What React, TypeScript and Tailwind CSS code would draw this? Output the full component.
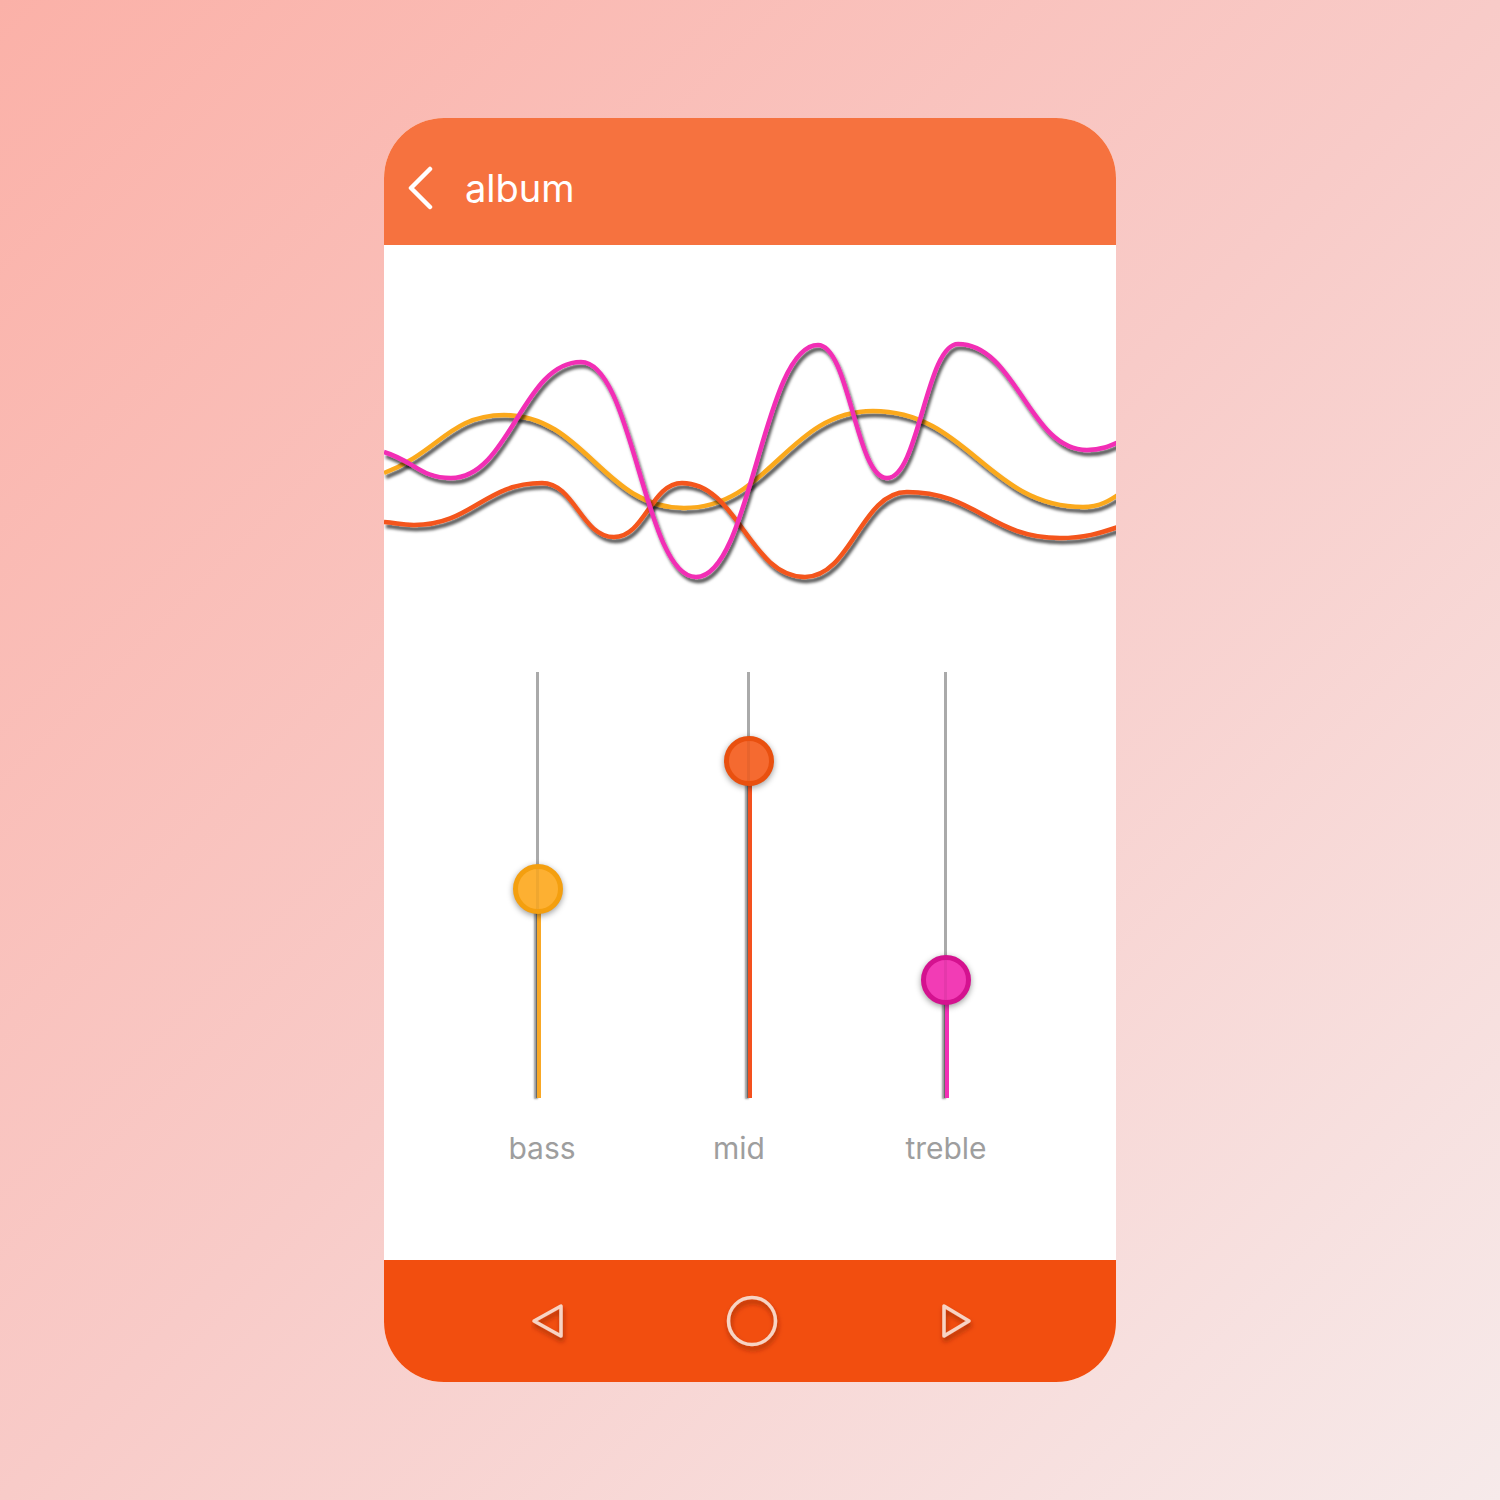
import React from "react"

type Pt = [number, number]

// smooth curve through extrema, control points kept horizontal
function wavePath(pts: Pt[], k = 0.45) {
  let d = `M${pts[0][0]},${pts[0][1]}`
  for (let i = 0; i < pts.length - 1; i++) {
    const [x1, y1] = pts[i]
    const [x2, y2] = pts[i + 1]
    const dx = (x2 - x1) * k
    const c1y = i === 0 ? y1 + (y2 - y1) * 0.35 : y1
    d += ` C${x1 + dx},${c1y} ${x2 - dx},${y2} ${x2},${y2}`
  }
  return d
}

const waves = [
  {
    color: "#fba91f",
    pts: [[384, 473], [504, 415], [684, 508], [873, 411], [1083, 507], [1160, 478]] as Pt[],
  },
  {
    color: "#f4541a",
    pts: [[384, 522], [414, 525], [542, 483], [614, 537], [682, 483], [805, 577], [907, 492], [1060, 538], [1170, 518]] as Pt[],
  },
  {
    color: "#f22fb5",
    pts: [[384, 452], [451, 478], [581, 362], [696, 577], [818, 345], [887, 478], [958, 344], [1087, 450], [1150, 434]] as Pt[],
  },
]

const sliders = [
  { label: "bass", knob: 217, ring: "#f49f0f", fill: "#fdb032", line: "#f9a825", ml: "ml-[94px]", shift: "translate-x-[4px]" },
  { label: "mid", knob: 89, ring: "#e9500f", fill: "#f56a30", line: "#f4511e", ml: "ml-[91px]", shift: "-translate-x-[10px]" },
  { label: "treble", knob: 308, ring: "#d4128f", fill: "#f23cb5", line: "#f22fb5", ml: "ml-[77px]", shift: "translate-x-0" },
]

function Slider({ s }: { s: (typeof sliders)[number] }) {
  return (
    <div className={`${s.ml} w-[120px] flex flex-col items-center`}>
      <div className="relative w-[6px] h-[426px]">
        <div className="absolute left-[1px] top-0 bottom-0 w-[3px] bg-[#aaaaaa]" />
        <div
          className="absolute left-[2px] bottom-0 w-[4px] shadow-[-3px_1px_2px_rgba(0,0,0,0.4)]"
          style={{ top: s.knob, background: s.line }}
        />
        <div
          className="absolute left-[-22px] w-[50px] h-[50px] rounded-full border-[5px] shadow-[0_2px_6px_rgba(0,0,0,0.4)]"
          style={{ top: s.knob - 25, borderColor: s.ring, background: s.fill }}
        >
          <div className="absolute left-[18px] top-0 bottom-0 w-[3px] bg-black/5" />
        </div>
      </div>
      <div className={`${s.shift} mt-[35px] text-[30px] leading-none text-[#9e9e9e] font-['Inter',sans-serif]`}>
        {s.label}
      </div>
    </div>
  )
}

export default function App() {
  return (
    <div className="w-[1500px] h-[1500px] bg-linear-to-br from-[#fbb1a8] via-[#f8cbc8] to-[#f6eaea] flex justify-center pt-[118px]">
      <div className="w-[732px] h-[1264px] rounded-[60px] overflow-hidden bg-white flex flex-col">
        {/* header */}
        <div className="h-[127px] bg-[#f6723f] flex items-center pt-[12px] pl-[23px]">
          <svg width="28" height="44" viewBox="0 0 28 44" className="mr-[30px]">
            <path d="M23 3 L4 22 L23 41" fill="none" stroke="white" strokeWidth="4.5" strokeLinecap="round" strokeLinejoin="round" />
          </svg>
          <span className="text-[38px] leading-none text-white font-['Inter',sans-serif]">album</span>
        </div>

        {/* body */}
        <div className="flex-1 flex flex-col">
          <svg className="mt-[55px]" width="732" height="320" viewBox="384 300 732 320">
            <defs>
              <filter id="sh" x="-10%" y="-20%" width="120%" height="140%">
                <feDropShadow dx="2" dy="4" stdDeviation="1.8" floodColor="#000" floodOpacity="0.65" />
              </filter>
            </defs>
            {waves.map((w, i) => (
              <path key={i} d={wavePath(w.pts)} fill="none" stroke={w.color} strokeWidth="4.5" filter="url(#sh)" />
            ))}
          </svg>

          <div className="mt-[52px] flex">
            {sliders.map((s) => (
              <Slider key={s.label} s={s} />
            ))}
          </div>
        </div>

        {/* nav bar */}
        <div className="h-[122px] bg-[#f24e0f] flex items-center pl-[147px]">
          <svg width="460" height="80" viewBox="531 1282 460 80">
            <defs>
              <filter id="ish" x="-50%" y="-50%" width="200%" height="200%">
                <feDropShadow dx="1" dy="4" stdDeviation="2.5" floodColor="#7a1e00" floodOpacity="0.6" />
              </filter>
            </defs>
            <g fill="none" stroke="#f7d4c4" strokeWidth="3.5" strokeLinejoin="round" strokeLinecap="round" filter="url(#ish)">
              <path d="M561 1307 L561 1337 L534 1322 Z" />
              <circle cx="752" cy="1322" r="23.5" />
              <path d="M944 1307 L944 1337 L969 1322 Z" />
            </g>
          </svg>
        </div>
      </div>
    </div>
  )
}
